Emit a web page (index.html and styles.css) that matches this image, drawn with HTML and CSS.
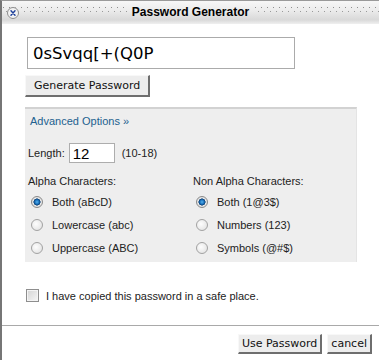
FILE: index.html
```html
<!DOCTYPE html>
<html lang="en">

<head>
    <meta charset="UTF-8">
    <title>Password Generator</title>
    <link rel="stylesheet" href="styles.css">
</head>

<body>
    <div class="dialog">
        <div class="titlebar">
            <span class="close">
                <svg width="12" height="12" viewBox="0 0 12 12">
                    <circle cx="6" cy="6" r="5.5" fill="#f2f2f2" stroke="#8c8c8c" stroke-width="1"/>
                    <path d="M4 3.8 L8 8.2 M8 3.8 L4 8.2" stroke="#1d3f9a" stroke-width="1.4" stroke-linecap="round"/>
                </svg>
            </span>
            <span class="title">Password Generator</span>
        </div>
        <div class="body">
            <input type="text" class="password" value="0sSvqq[+(Q0P">
            <button class="btn btn-gen">Generate Password</button>
            <div class="panel">
                <a class="advanced">Advanced Options &raquo;</a>
                <div class="length">
                    <span>Length:</span>
                    <input type="text" class="length-input" value="12">
                    <span class="range">(10-18)</span>
                </div>
                <div class="cols">
                    <div class="col">
                        <div class="col-title">Alpha Characters:</div>
                        <label class="opt"><input type="radio" name="alpha" checked>Both (aBcD)</label>
                        <label class="opt"><input type="radio" name="alpha">Lowercase (abc)</label>
                        <label class="opt"><input type="radio" name="alpha">Uppercase (ABC)</label>
                    </div>
                    <div class="col">
                        <div class="col-title">Non Alpha Characters:</div>
                        <label class="opt"><input type="radio" name="nonalpha" checked>Both (1@3$)</label>
                        <label class="opt"><input type="radio" name="nonalpha">Numbers (123)</label>
                        <label class="opt"><input type="radio" name="nonalpha">Symbols (@#$)</label>
                    </div>
                </div>
            </div>
            <label class="copied"><input type="checkbox">I have copied this password in a safe place.</label>
        </div>
        <div class="sep"></div>
        <div class="actions">
            <button class="btn btn-small">Use Password</button>
            <button class="btn btn-small">cancel</button>
        </div>
    </div>
</body>

</html>
```
FILE: styles.css
```css
* {
    box-sizing: border-box;
}

body {
    margin: 0;
    background: #fff;
    font-family: 'Liberation Sans', Arial, sans-serif;
    font-size: 11px;
    color: #222;
}

.dialog {
    width: 379px;
    height: 360px;
    border-left: 2px solid #767676;
    border-top: 1px solid #9a9a9a;
    background: #fff;
}

.titlebar {
    height: 23px;
    display: grid;
    grid-template-columns: 1fr auto 1fr;
    align-items: center;
    background:
        radial-gradient(circle 1px at 1.5px 6.5px, #8e8e8e 0, #8e8e8e 0.6px, transparent 1px) 0 0 / 6px 23px repeat-x,
        radial-gradient(circle 1px at 4.5px 10.5px, #9a9a9a 0, #9a9a9a 0.6px, transparent 1px) 0 0 / 6px 23px repeat-x,
        linear-gradient(#f7f7f7, #ececec 40%, #d9d9d9 82%, #f0f0f0);
}

.close {
    justify-self: start;
    margin-left: 5px;
    height: 12px;
    background: #f0f0f0;
    border-radius: 50%;
}

.close svg {
    display: block;
}

.title {
    padding: 0 4px;
    line-height: 23px;
    font-weight: bold;
    font-size: 12px;
    color: #000;
    background: linear-gradient(#f7f7f7, #ececec 40%, #d9d9d9 82%, #f0f0f0);
}

.body {
    padding: 13px 22px 0 23px;
}

.password {
    display: block;
    width: 268px;
    height: 32px;
    margin-left: 2px;
    padding: 0 5px;
    border: 1px solid #ababab;
    font-family: 'DejaVu Sans', Verdana, sans-serif;
    font-size: 16.5px;
    color: #000;
}

.btn {
    font-family: 'DejaVu Sans', Verdana, sans-serif;
    font-size: 11px;
    color: #111;
    background: #ededed;
    border-style: solid;
    border-width: 1px 2px 2px 1px;
    border-color: #f8f8f8 #6e6e6e #6e6e6e #f8f8f8;
    padding: 0 7px;
    cursor: pointer;
}

.btn-gen {
    display: block;
    height: 22px;
    margin-top: 6px;
    padding: 0 8px;
}

.panel {
    margin-top: 10px;
    height: 155px;
    background: #eee;
    border-top: 2px solid #d2d2d2;
    border-right: 1px solid #e4e4e4;
    padding: 6px 0 3px 3px;
}

.advanced {
    display: block;
    margin-left: 2px;
    line-height: 13px;
    color: #22618f;
}

.length {
    display: flex;
    align-items: center;
    margin-top: 15px;
    height: 20px;
}

.length-input {
    width: 46px;
    height: 20px;
    margin: 0 7px 0 4px;
    padding: 0 3px;
    border: 1px solid #adadad;
    font-family: 'Liberation Sans', Arial, sans-serif;
    font-size: 15px;
    color: #000;
}

.cols {
    display: grid;
    grid-template-columns: 165px auto;
    margin-top: 12px;
}

.col-title {
    line-height: 13px;
    margin-bottom: 2px;
}

.opt {
    display: flex;
    align-items: center;
    height: 23px;
}

.opt input {
    appearance: none;
    width: 12px;
    height: 12px;
    margin: 0 9px 0 3px;
    border-radius: 50%;
    border: 1px solid #a2a2a2;
    background: radial-gradient(circle at 40% 40%, #fdfdfd, #dedede);
}

.opt input:checked {
    border-color: #8a8a8a;
    background: radial-gradient(circle, #5ab4ee 0, #1b74c0 2px, #0d3f73 3.3px, #e9e9e9 3.8px, #d6d6d6);
}

.copied {
    display: flex;
    align-items: center;
    margin-top: 27px;
    height: 13px;
}

.copied input {
    appearance: none;
    width: 13px;
    height: 13px;
    margin: 0 7px 0 1px;
    border: 1px solid #8e8e8e;
    box-shadow: inset 0 0 0 1px #f4f4f4;
    background: linear-gradient(135deg, #d4d4d4, #f6f6f6);
}

.sep {
    margin-top: 23px;
    border-top: 1px solid #a9a9a9;
}

.actions {
    display: flex;
    justify-content: flex-end;
    gap: 5px;
    margin-top: 8px;
    padding-right: 7px;
}

.btn-small {
    height: 20px;
    padding: 0 3px;
}
```
